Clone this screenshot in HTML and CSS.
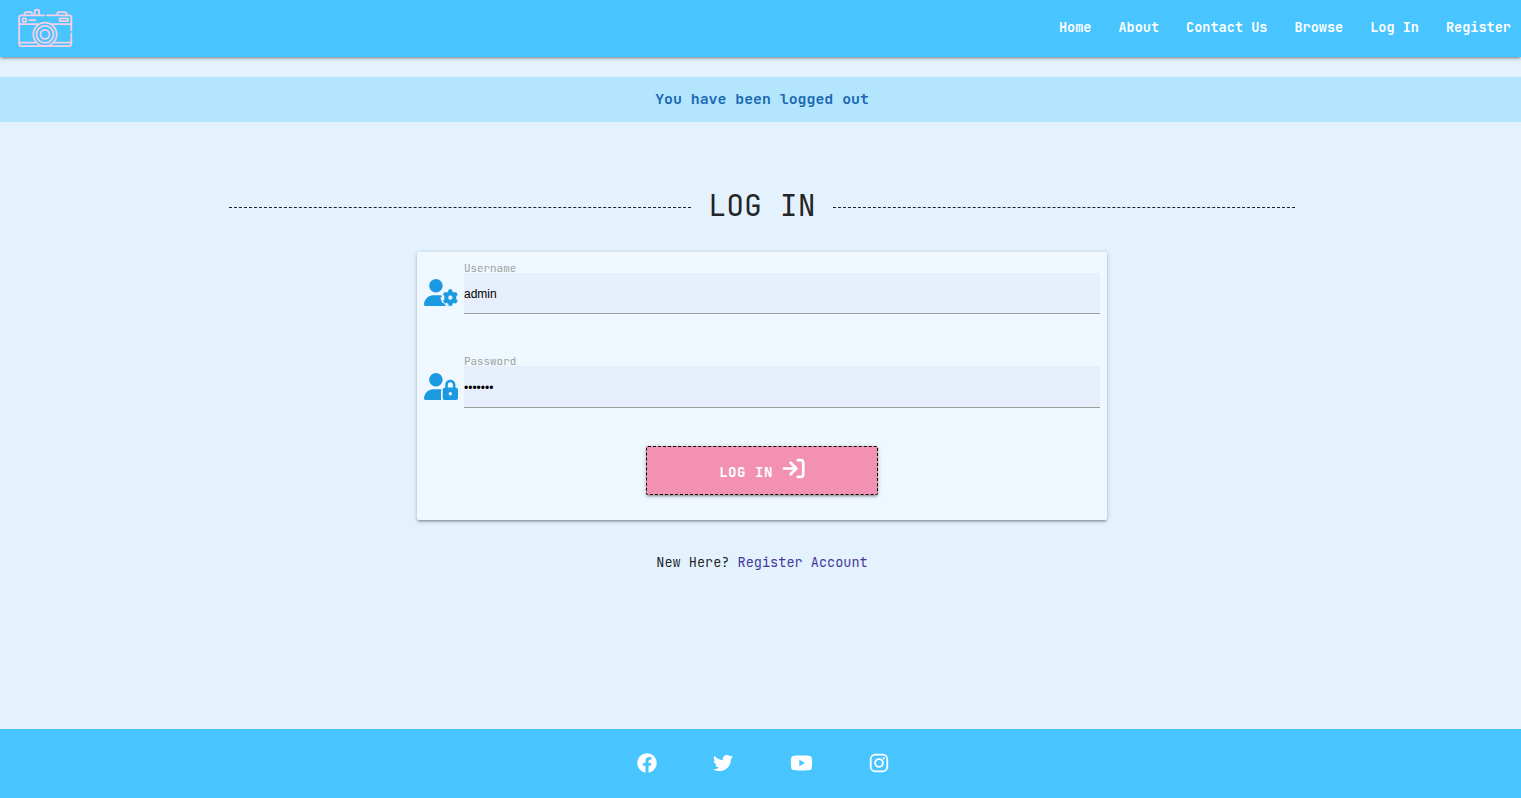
FILE: index.html
```html
<!DOCTYPE html>
<html lang="en">
<head>
<meta charset="utf-8">
<title>Log In</title>
<link rel="stylesheet" href="styles.css">
</head>
<body>
<nav class="navbar">
  <a class="brand" href="#" aria-label="Home">
    <svg width="55" height="39" viewBox="0 0 56 40" fill="none" stroke="#f8d0e6" stroke-width="1.8" stroke-linejoin="round" stroke-linecap="round">
      <path d="M26.5 6.5H3a2 2 0 0 0-2 2V36a2 2 0 0 0 2 2H52.500a2 2 0 0 0 2-2V25M54.500 22V8.500a2 2 0 0 0-2-2H29.500"/>
      <path d="M1 15.500H19.500M34.500 15.500H54.500M1 34.500H18M36 34.500H54.500"/>
      <path d="M6.500 6V5q0-1.700 1.700-1.700H12.500Q14.300 3.300 14.300 5V6M17 6V1.800Q17 1 17.800 1H20.700Q21.500 1 21.500 1.800V6M40 6V5q0-1.700 1.700-1.700H47.500Q49.500 3.300 49.500 5V6"/>
      <rect x="4.500" y="9.500" width="3.600" height="3.600" rx="1"/>
      <path d="M11.500 11.300H17.500"/>
      <rect x="42.500" y="9.500" width="8.500" height="3" rx=".5"/>
      <circle cx="27.500" cy="26" r="12"/><circle cx="27.500" cy="26" r="8.800"/><circle cx="27.500" cy="26" r="4.600"/>
    </svg>
  </a>
  <ul class="nav-links">
    <li><a href="#">Home</a></li><li><a href="#">About</a></li><li><a href="#">Contact Us</a></li><li><a href="#">Browse</a></li><li><a href="#">Log In</a></li><li><a href="#">Register</a></li>
  </ul>
</nav>
<div class="flash">You have been logged out</div>
<main>
  <h1 class="title">LOG IN</h1>
  <form class="card">
    <div class="field">
      <svg class="field-icon" viewBox="0 0 640 512" fill="currentColor">
        <clipPath id="gear-cut"><path d="M0 0H640V200H430L345 245 320 290 335 335 310 352 325 405 350 450 372 455 392 480 425 512H0z"/></clipPath>
        <path d="M224 256A128 128 0 1 0 224 0a128 128 0 1 0 0 256zm-45.700 48C79.800 304 0 383.800 0 482.300C0 498.700 13.300 512 29.700 512H425V304H178.300z" clip-path="url(#gear-cut)"/>
        <path fill-rule="evenodd" d="M468 203Q496 197 524 203L533 242Q549 249 563 259L601 248Q620 270 629 296L602 324Q606 352 602 380L629 408Q620 434 601 456L563 445Q549 455 533 462L524 501Q496 507 468 501L459 462Q443 455 429 445L391 456Q372 434 363 408L390 380Q386 352 390 324L363 296Q372 270 391 248L429 259Q443 249 459 242zM496 308a44 44 0 1 0 0 88a44 44 0 1 0 0-88z" stroke="currentColor" stroke-width="10" stroke-linejoin="round"/>
      </svg>
      <div class="control">
        <label>Username</label>
        <div class="input">admin</div>
      </div>
    </div>
    <div class="field">
      <svg class="field-icon" viewBox="0 0 640 512" fill="currentColor">
        <path d="M224 256A128 128 0 1 0 224 0a128 128 0 1 0 0 256zm-45.700 48C79.800 304 0 383.800 0 482.300C0 498.700 13.300 512 29.700 512H325c-3-9-5-20-5-32V352c0-17 5-32 13-44c-20-3-40-4-63.300-4H178.300z"/>
        <path fill-rule="evenodd" d="M496 176c26.500 0 48 21.500 48 48v48H448V224c0-26.500 21.500-48 48-48zm-96 48v48c-26.500 0-48 21.500-48 48V464c0 26.500 21.500 48 48 48H592c26.500 0 48-21.500 48-48V320c0-26.500-21.500-48-48-48V224c0-53-43-96-96-96s-96 43-96 96zM496 360a32 32 0 1 1 0 64a32 32 0 1 1 0-64z"/>
      </svg>
      <div class="control">
        <label>Password</label>
        <div class="input">•••••••</div>
      </div>
    </div>
    <button class="submit" type="button">
      <span>LOG IN</span>
      <svg width="23" height="21" viewBox="0 0 24 22" fill="none" stroke="currentColor" stroke-width="2.800" stroke-linecap="round" stroke-linejoin="round"><path d="M2 11H14.500M9 5L15 11L9 17M16.500 2.200H19.500Q22.200 2.200 22.200 5V17Q22.200 19.800 19.500 19.800H16.500"/></svg>
    </button>
  </form>
  <p class="register">New Here? <a href="#">Register Account</a></p>
</main>
<footer class="footer">
  <svg viewBox="0 0 512 512" width="20" height="20" fill="currentColor"><path d="M504 256C504 119 393 8 256 8S8 119 8 256c0 123.780 90.690 226.380 209.250 245V327.690h-63V256h63v-54.640c0-62.150 37-96.480 93.670-96.480 27.140 0 55.520 4.840 55.520 4.840v61h-31.280c-30.800 0-40.410 19.120-40.410 38.730V256h68.780l-11 71.690h-57.780V501C413.310 482.380 504 379.780 504 256z"/></svg>
  <svg viewBox="0 0 512 512" width="20" height="20" fill="currentColor"><path d="M459.370 151.716c.325 4.548.325 9.097.325 13.645 0 138.720-105.583 298.558-298.558 298.558-59.452 0-114.680-17.219-161.137-47.106 8.447.974 16.568 1.299 25.340 1.299 49.055 0 94.213-16.568 130.274-44.832-46.132-.975-84.792-31.188-98.112-72.772 6.498.974 12.995 1.624 19.818 1.624 9.421 0 18.843-1.300 27.614-3.573-48.081-9.747-84.143-51.980-84.143-102.985v-1.299c13.969 7.797 30.214 12.670 47.431 13.319-28.264-18.843-46.781-51.005-46.781-87.391 0-19.492 5.197-37.360 14.294-52.954 51.655 63.675 129.300 105.258 216.365 109.807-1.624-7.797-2.599-15.918-2.599-24.040 0-57.828 46.782-104.934 104.934-104.934 30.213 0 57.502 12.670 76.670 33.137 23.715-4.548 46.456-13.320 66.599-25.340-7.798 24.366-24.366 44.833-46.132 57.827 21.117-2.273 41.584-8.122 60.426-16.243-14.292 20.791-32.161 39.308-52.628 54.253z"/></svg>
  <svg viewBox="0 0 576 512" width="23" height="20" fill="currentColor"><path d="M549.655 124.083c-6.281-23.650-24.787-42.276-48.284-48.597C458.781 64 288 64 288 64S117.220 64 74.629 75.486c-23.497 6.322-42.003 24.947-48.284 48.597-11.412 42.867-11.412 132.305-11.412 132.305s0 89.438 11.412 132.305c6.281 23.650 24.787 41.500 48.284 47.821C117.220 448 288 448 288 448s170.780 0 213.371-11.486c23.497-6.321 42.003-24.171 48.284-47.821 11.412-42.867 11.412-132.305 11.412-132.305s0-89.438-11.412-132.305zm-317.510 213.508V175.185l142.739 81.205-142.739 81.201z"/></svg>
  <svg viewBox="0 0 20 20" width="20" height="20" fill="none" stroke="currentColor" stroke-width="1.800"><rect x="1.700" y="1.700" width="16.600" height="16.600" rx="4.500"/><circle cx="10" cy="10" r="3.900"/><circle cx="14.700" cy="5.300" r="1.100" fill="currentColor" stroke="none"/></svg>
</footer>
</body>
</html>
```
FILE: styles.css
```css
* { box-sizing: border-box; }
body {
  margin: 0;
  height: 798px;
  display: flex;
  flex-direction: column;
  overflow: hidden;
  background: #e3f2fd;
  color: rgba(0, 0, 0, .87);
  font-family: "JetBrains Mono", "DejaVu Sans Mono", monospace;
  font-size: 13.55px;
}
a { color: inherit; text-decoration: none; }
.navbar {
  height: 57px;
  flex: none;
  display: flex;
  justify-content: space-between;
  padding: 0 10px 0 17.5px;
  background: #48c4ff;
  box-shadow: 0 2px 2px rgba(0,0,0,.14), 0 3px 1px -2px rgba(0,0,0,.12), 0 1px 5px rgba(0,0,0,.2);
}
.brand { padding-top: 9px; }
.nav-links {
  display: flex;
  gap: 27px;
  list-style: none;
  margin: 0;
  padding: 0;
  line-height: 55px;
  color: #fff;
  font-weight: bold;
}
.flash {
  flex: none;
  height: 45px;
  margin-top: 20px;
  padding-left: 3px;
  line-height: 43px;
  text-align: center;
  background: #b3e5fc;
  color: #1b69b3;
  font-size: 14.85px;
  font-weight: bold;
}
main {
  flex: 1;
  display: flex;
  flex-direction: column;
  align-items: center;
  padding-left: 3px;
}
.title {
  display: flex;
  align-items: center;
  gap: 17px;
  width: 1066px;
  height: 40px;
  margin: 63px 0 27px;
  font-size: 29.8px;
  font-weight: normal;
}
.title::before, .title::after {
  content: "";
  flex: 1;
  margin-top: 5px;
  border-top: 1px dashed #222;
}
.card {
  width: 690px;
  height: 268px;
  padding: 10px 7px 0;
  background: #f0f8ff;
  border-radius: 2px;
  box-shadow: 0 2px 2px rgba(0,0,0,.14), 0 3px 1px -2px rgba(0,0,0,.12), 0 1px 5px rgba(0,0,0,.2);
}
.field { display: flex; gap: 6px; height: 93.500px; }
.field-icon { width: 34px; height: 27.2px; margin-top: 17.4px; color: #1b9ae2; }
.control { flex: 1; }
.control label {
  display: block;
  height: 11px;
  line-height: 13px;
  font-size: 10.88px;
  color: #9e9e9e;
}
.field + .field .control { margin-top: -.6px; }
.field + .field .input { height: 41.6px; line-height: 44px; }
.input {
  height: 41px;
  line-height: 43px;
  background: #e8effc;
  border-bottom: 1px solid #9e9e9e;
  color: #000;
  font-family: "Liberation Sans", Arial, sans-serif;
  font-size: 12px;
}
.submit {
  display: flex;
  align-items: center;
  justify-content: center;
  gap: 9px;
  width: 232px;
  height: 49px;
  margin: -3px auto 0;
  padding: 0;
  border: 1px dashed #000;
  border-radius: 2px;
  background: #f291b2;
  color: #fff;
  font: bold 14.1px "JetBrains Mono", "DejaVu Sans Mono", monospace;
  letter-spacing: .5px;
  box-shadow: 0 2px 2px rgba(0,0,0,.14), 0 3px 1px -2px rgba(0,0,0,.12), 0 1px 5px rgba(0,0,0,.2);
}
.submit span { padding-top: 3px; }
.submit svg { margin-top: -4px; }
.register { margin: 32px 0 0; line-height: 20px; }
.register a { color: #311b92; opacity: .88; }
.footer {
  flex: none;
  height: 69px;
  display: flex;
  justify-content: center;
  gap: 56.3px;
  padding: 23.6px 0 0 4.8px;
  background: #48c4ff;
  color: #fff;
}
```
